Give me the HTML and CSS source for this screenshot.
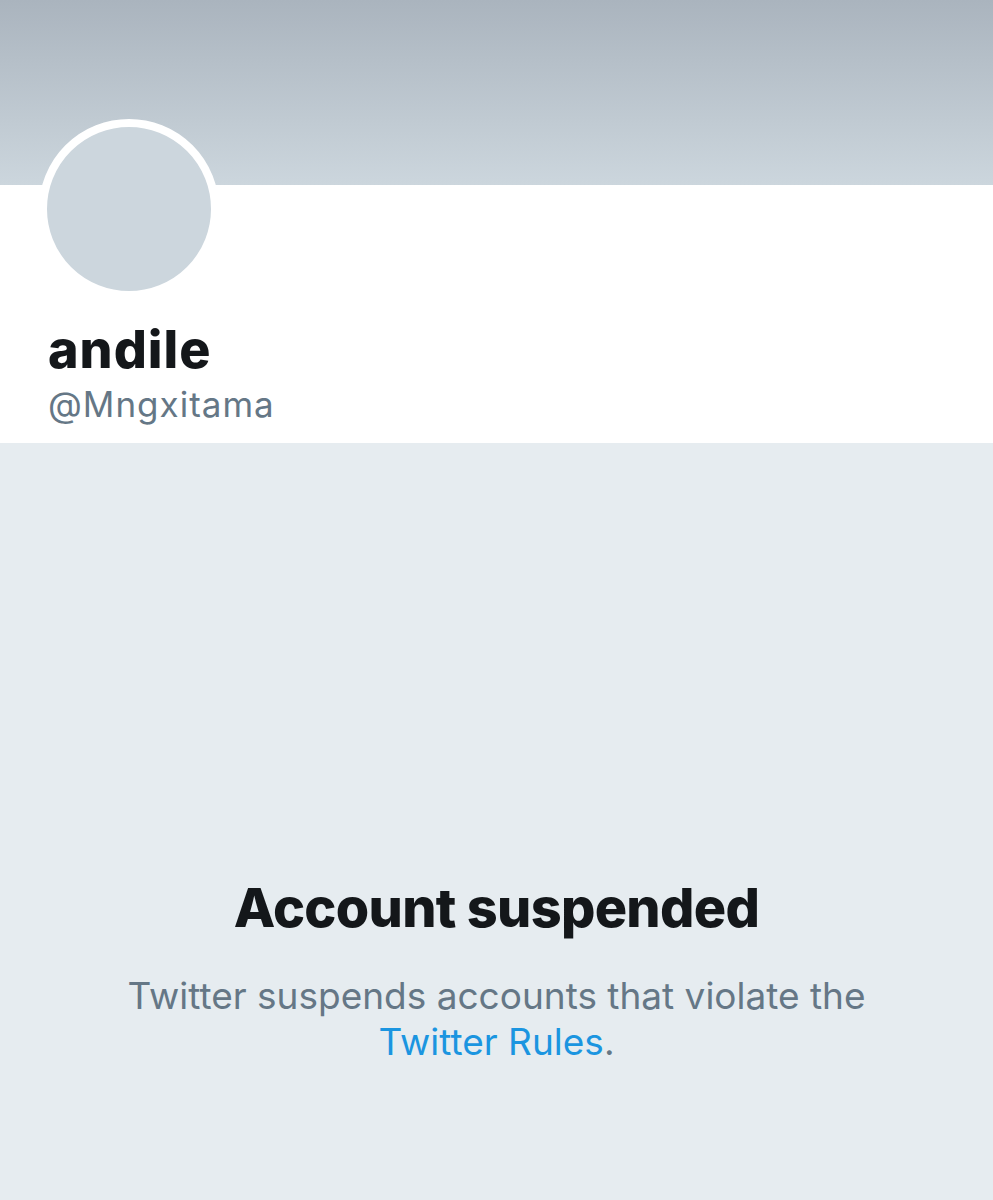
FILE: index.html
```html
<!DOCTYPE html>
<html>
<head>
<meta charset="utf-8">
<link rel="stylesheet" href="styles.css">
</head>
<body>
<div class="page">
  <header class="banner"></header>
  <section class="profile">
    <div class="avatar"></div>
    <h1 class="name">andile</h1>
    <div class="handle">@Mngxitama</div>
  </section>
  <section class="suspended">
    <h2 class="title">Account suspended</h2>
    <p class="desc">Twitter suspends accounts that violate the <a class="link" href="#">Twitter Rules</a>.</p>
  </section>
</div>
</body>
</html>
```
FILE: styles.css
```css
html, body {
  margin: 0;
  padding: 0;
}
body {
  width: 993px;
  height: 1200px;
  overflow: hidden;
  background: #e6ecf0;
  font-family: Inter, "Noto Sans", sans-serif;
}
.page {
  display: flex;
  flex-direction: column;
  height: 1200px;
}
.banner {
  height: 185px;
  background: linear-gradient(to bottom, #aab4be, #ccd6dd);
}
.profile {
  position: relative;
  background: #fff;
  height: 258px;
  padding: 0 48px;
  box-sizing: border-box;
  display: flex;
  flex-direction: column;
}
.avatar {
  position: absolute;
  left: 39px;
  top: -66px;
  width: 164px;
  height: 164px;
  border-radius: 50%;
  background: #ccd6dd;
  border: 8px solid #fff;
}
.name {
  margin: 136px 0 0 0;
  font-size: 52px;
  font-weight: 800;
  line-height: 58px;
  color: #14171a;
  letter-spacing: 1px;
}
.handle {
  margin-top: 3px;
  font-size: 35px;
  line-height: 44px;
  color: #657786;
  letter-spacing: 1px;
}
.suspended {
  flex: 1;
  display: flex;
  flex-direction: column;
  align-items: center;
  padding-top: 434px;
}
.title {
  margin: 0;
  font-size: 54px;
  font-weight: 800;
  line-height: 62px;
  color: #14171a;
  letter-spacing: -0.7px;
}
.desc {
  margin: 34px 0 0 0;
  width: 800px;
  text-align: center;
  font-size: 37px;
  line-height: 46px;
  color: #657786;
}
.link {
  color: #1b95e0;
  text-decoration: none;
}
```
